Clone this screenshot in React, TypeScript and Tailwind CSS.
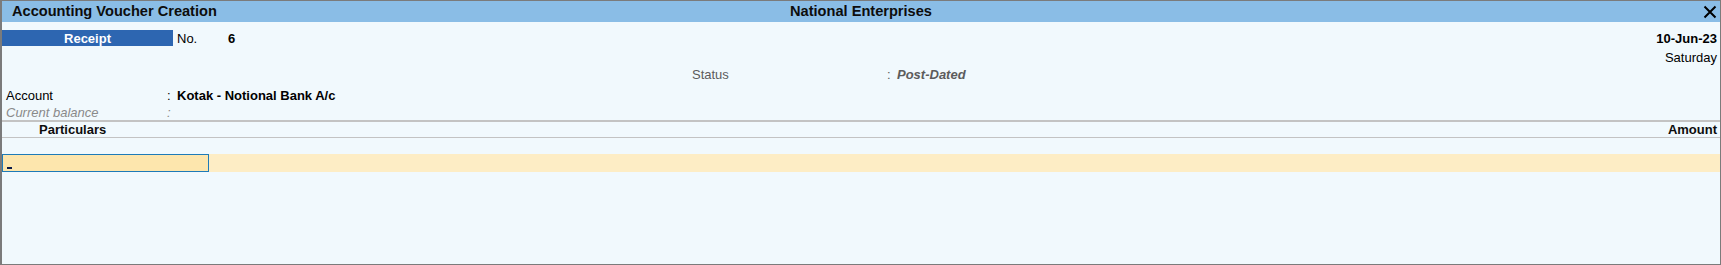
import React from 'react'

const App = () => {
    return (
        <div className="w-[1721px] h-[265px] bg-[#f1f9fd] border-t border-r border-b border-l-2 border-[#7b7b7b] flex flex-col font-['Liberation_Sans',Arial,sans-serif] text-[13px] text-black leading-none overflow-hidden">
            <header className="h-[21px] bg-[#8abde6] flex items-center relative">
                <h1 className="pl-[10px] font-bold text-[14.6px] text-[#0d0d0d]">Accounting Voucher Creation</h1>
                <h2 className="absolute left-0 right-0 text-center font-bold text-[14.6px] text-[#0d0d0d]">
                    National Enterprises
                </h2>
                <button className="ml-auto mr-[2px] w-[16px] h-[16px] flex items-center justify-center z-10">
                    <svg width="14" height="14" viewBox="0 0 14 14">
                        <path d="M1.5 1.5 L12.5 12.5 M12.5 1.5 L1.5 12.5" stroke="#000" strokeWidth="2" />
                    </svg>
                </button>
            </header>

            <div className="flex items-center h-[16px] mt-[8px]">
                <div className="w-[171px] h-full bg-[#2d66b1] text-white font-bold flex items-center justify-center">
                    Receipt
                </div>
                <span className="ml-[4px] w-[51px]">No.</span>
                <span className="font-bold">6</span>
                <span className="ml-auto pr-[3px] font-bold">10-Jun-23</span>
            </div>
            <div className="flex items-center h-[16px] mt-[3px]">
                <span className="ml-auto pr-[3px]">Saturday</span>
            </div>
            <div className="flex items-center h-[16px] mt-[1px]">
                <span className="ml-[690px] w-[195px] text-[#5c5c5c]">Status</span>
                <span className="w-[10px] text-[#5c5c5c]">:</span>
                <span className="font-bold italic text-[#5c5c5c]">Post-Dated</span>
            </div>

            <div className="flex items-center h-[17px] mt-[5px]">
                <span className="ml-[4px] w-[161px]">Account</span>
                <span className="w-[10px]">:</span>
                <span className="font-bold">Kotak - Notional Bank A/c</span>
            </div>
            <div className="flex items-center h-[16px] text-[#8a8a8a] italic">
                <span className="ml-[4px] w-[161px]">Current balance</span>
                <span className="w-[10px]">:</span>
            </div>

            <div className="h-[2px] bg-[#c3c3c3]" />
            <div className="flex items-center h-[16px] border-b border-[#c3c3c3] font-bold text-[#0d0d0d]">
                <span className="ml-[37px]">Particulars</span>
                <span className="ml-auto pr-[3px]">Amount</span>
            </div>
            <div className="h-[16px]" />
            <div className="flex h-[18px] bg-[#fdedc5]">
                <div className="w-[207px] h-full bg-[#fde6ad] border border-[#1e7bb8] flex items-end pl-[4px] pb-[1px]">
                    <span className="w-[5px] h-[2px] bg-[#0a1a4a] mb-[1px]" />
                </div>
            </div>
        </div>
    )
}

export default App
